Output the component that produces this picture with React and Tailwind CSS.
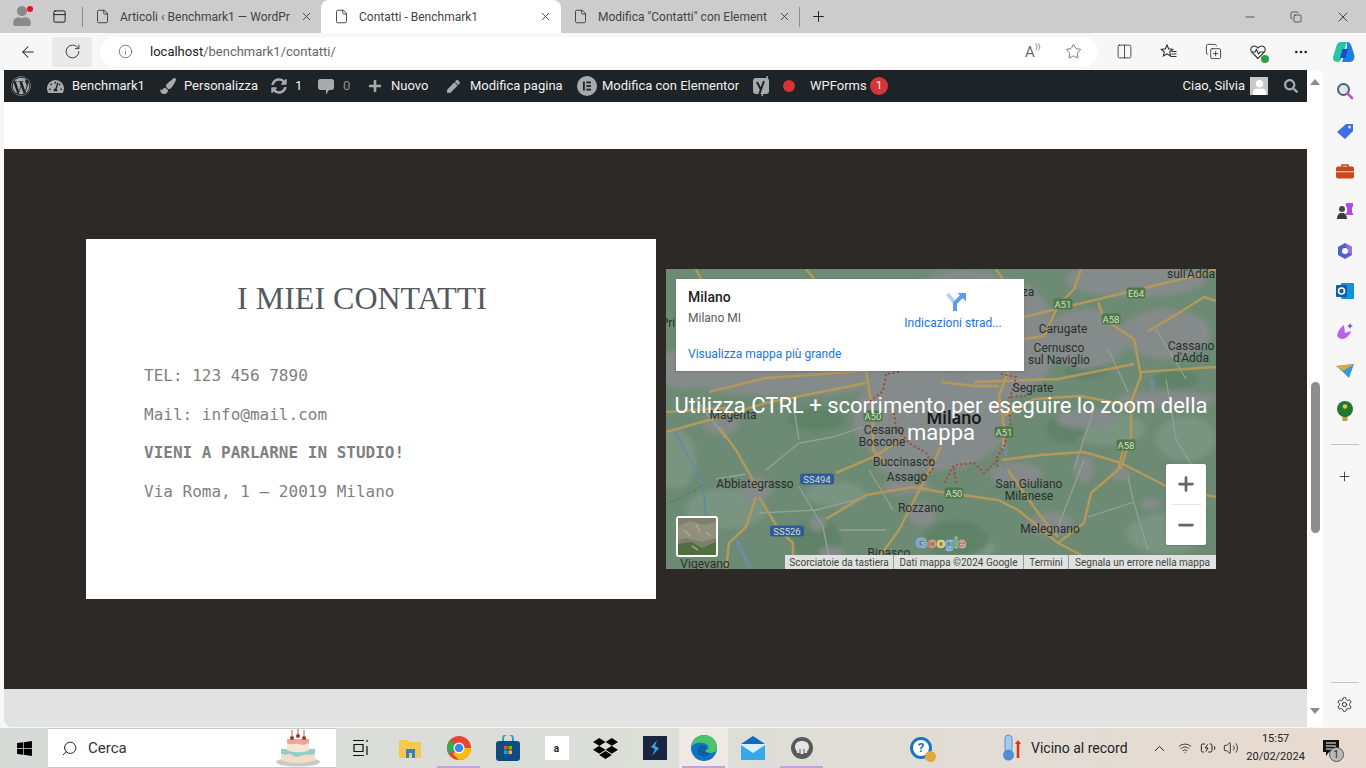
import React from "react";
import {
  ArrowLeft,
  RotateCw,
  Info,
  Star,
  Columns2,
  CopyPlus,
  MoreHorizontal,
  Plus,
  X,
  Minus,
  Copy,
  File,
  PanelTop,
  Settings,
  Search,
  ChevronUp,
  Wifi,
  Volume2,
  BatteryCharging,
} from "lucide-react";
import {
  FaWordpress,
  FaTachometerAlt,
  FaPaintBrush,
  FaSyncAlt,
  FaPlus,
  FaPen,
  FaSearch,
  FaWindows,
  FaDropbox,
  FaUser,
} from "react-icons/fa";

function Tab({ title, active, width, pad, closeGap }) {
  return (
    <div
      className={`flex items-center h-[33px] shrink-0 ${width} ${pad} ${
        active ? "bg-white rounded-t-lg" : ""
      }`}
    >
      <File size={15} strokeWidth={1.4} className="text-[#333] shrink-0" />
      <span className="ml-[10px] text-[12px] text-[#444] whitespace-nowrap overflow-hidden flex-1">
        {title}
      </span>
      <X size={13} strokeWidth={1.5} className={`text-[#333] ml-[6px] shrink-0 ${closeGap}`} />
    </div>
  );
}

function TabStrip() {
  return (
    <div className="flex items-center h-[33px] bg-[#cccccc] shrink-0">
      <div className="relative w-[44px] flex justify-center">
        <div className="w-[18px] h-[22px] flex justify-center items-start">
          <FaUser size={20} className="text-[#8a8a8a]" />
        </div>
        <div className="absolute left-[27px] top-[0px] w-[6px] h-[6px] rounded-full bg-[#e81123]" />
      </div>
      <PanelTop size={15} strokeWidth={1.6} className="text-[#222] ml-[8px]" />
      <div className="w-px h-[20px] bg-[#8e8e8e] ml-[15px]" />
      <Tab title="Articoli ‹ Benchmark1 — WordPr" width="w-[238px]" pad="pl-[12px]" closeGap="mr-[8px]" />
      <Tab title="Contatti - Benchmark1" active width="w-[240px]" pad="pl-[13px]" closeGap="mr-[9px]" />
      <Tab title={'Modifica "Contatti" con Element'} width="w-[238px]" pad="pl-[12px]" closeGap="mr-[8px]" />
      <div className="w-px h-[20px] bg-[#8e8e8e]" />
      <Plus size={17} strokeWidth={1.4} className="text-[#222] ml-[10px]" />
      <div className="flex-1" />
      <Minus size={14} strokeWidth={1.2} className="text-[#222] mr-[33px]" />
      <Copy size={12} strokeWidth={1.3} className="text-[#222] mr-[33px]" />
      <X size={16} strokeWidth={1.2} className="text-[#222] mr-[15px]" />
    </div>
  );
}

function ReadAloud() {
  return (
    <div className="flex items-start text-[#6a6a6a] w-[18px] h-[18px] relative">
      <span className="text-[15px] leading-[18px]">A</span>
      <span className="absolute left-[10px] top-[-2px] text-[8px]">))</span>
    </div>
  );
}

function FavList() {
  return (
    <svg width="18" height="18" viewBox="0 0 18 18" fill="none" stroke="#333" strokeWidth="1.1">
      <path d="M7 2l1.7 3.9 4 .4-3 2.7.9 4-3.6-2.1-3.6 2.1.9-4-3-2.7 4-.4z" />
      <path d="M11.5 8.5h5M11.5 11h5M10.5 13.5h6" />
    </svg>
  );
}

function HeartPulse() {
  return (
    <div className="relative w-[18px] h-[18px]">
      <svg width="18" height="18" viewBox="0 0 18 18" fill="none" stroke="#333" strokeWidth="1.1">
        <path d="M9 15.5L2.5 9C.6 6.5 2.5 3 5.2 3 7 3 8.2 4 9 5c.8-1 2-2 3.8-2 2.7 0 4.6 3.5 2.7 6z" />
        <path d="M3 9h3l1.4-2.5L9.5 11l1.4-2H15" />
      </svg>
      <div className="absolute right-[-2px] bottom-[-2px] w-[8px] h-[8px] rounded-full bg-[#2f9e44]" />
    </div>
  );
}

function CopilotLogo() {
  return (
    <svg width="24" height="24" viewBox="0 0 24 24">
      <path d="M9 2h6l-5 15c-.7 3-2.5 5-5 5-3 0-4.600-3-3.600-6l2.400-8C4.600 4 6 2 9 2z" fill="#29c3a6" />
      <path d="M15 2c2.500 0 4 2 4.600 4.500l2.800 9c.6 3-1.400 6.500-4.400 6.500H10l5-15z" fill="#1f7fe0" />
      <path d="M10.500 9H16l-2.500 9H8z" fill="#1850c4" />
    </svg>
  );
}

function Toolbar() {
  return (
    <div className="flex items-center h-[37px] bg-[#f7f7f7] shrink-0">
      <ArrowLeft size={18} strokeWidth={1.4} className="text-[#222] ml-[19px]" />
      <div className="w-[40px] h-[30px] ml-[15px] bg-[#e9e9e9] rounded flex items-center justify-center">
        <RotateCw size={17} strokeWidth={1.3} className="text-[#333]" />
      </div>
      <div className="w-[998px] h-[30px] ml-[8px] bg-white rounded-full flex items-center">
        <Info size={15} strokeWidth={1.2} className="text-[#555] ml-[18px]" />
        <span className="ml-[17px] text-[13px] text-[#222]">
          localhost<span className="text-[#666]">/benchmark1/contatti/</span>
        </span>
        <div className="flex-1" />
        <ReadAloud />
        <Star size={17} strokeWidth={1.1} className="text-[#555] ml-[22px] mr-[16px]" />
      </div>
      <Columns2 size={17} strokeWidth={1.2} className="text-[#333] ml-[18px]" />
      <div className="ml-[27px]">
        <FavList />
      </div>
      <CopyPlus size={17} strokeWidth={1.2} className="text-[#333] ml-[27px]" />
      <div className="ml-[27px]">
        <HeartPulse />
      </div>
      <MoreHorizontal size={16} strokeWidth={2} className="text-[#222] ml-[26px]" />
      <div className="ml-[23px]">
        <CopilotLogo />
      </div>
    </div>
  );
}

function ElementorIcon() {
  return (
    <svg width="20" height="20" viewBox="0 0 20 20">
      <circle cx="10" cy="10" r="10" fill="#a7aaad" />
      <rect x="6" y="5.5" width="1.8" height="9" fill="#1d2327" />
      <rect x="9.3" y="5.5" width="4.7" height="1.8" fill="#1d2327" />
      <rect x="9.3" y="9.1" width="4.7" height="1.8" fill="#1d2327" />
      <rect x="9.3" y="12.7" width="4.7" height="1.8" fill="#1d2327" />
    </svg>
  );
}

function CommentIcon() {
  return (
    <svg width="16" height="17" viewBox="0 0 16 17">
      <path d="M2.500 1h11C15 1 16 2 16 3.500v6C16 11 15 12 13.500 12H11l-3 4.500V12H2.500C1 12 0 11 0 9.500v-6C0 2 1 1 2.500 1z" fill="#a7aaad" />
    </svg>
  );
}

function YoastIcon() {
  return (
    <svg width="19" height="21" viewBox="0 0 19 21">
      <rect x="0" y="2" width="16" height="16" rx="3" fill="#a7aaad" />
      <path d="M4 6l3.500 7M11 5L6 19" fill="none" stroke="#1d2327" strokeWidth="2" />
      <path d="M14.500 0L9 20" stroke="#a7aaad" strokeWidth="1.5" />
    </svg>
  );
}

function AdminBar() {
  return (
    <div className="flex items-center h-8 bg-[#1d2327] text-[13px] text-[#f0f0f1] shrink-0">
      <FaWordpress size={20} className="text-[#a7aaad] ml-[7px]" />
      <FaTachometerAlt size={17} className="text-[#a7aaad] ml-[16px]" />
      <span className="ml-[8px] w-[71px]">Benchmark1</span>
      <FaPaintBrush size={16} className="text-[#a7aaad] ml-[17px]" />
      <span className="ml-[8px] w-[70px]">Personalizza</span>
      <FaSyncAlt size={16} className="text-[#a7aaad] ml-[17px]" />
      <span className="ml-[8px] w-[6px]">1</span>
      <div className="ml-[17px]">
        <CommentIcon />
      </div>
      <span className="ml-[9px] w-[7px] text-[#8c8f94]">0</span>
      <FaPlus size={14} className="text-[#a7aaad] ml-[18px]" />
      <span className="ml-[9px] w-[39px]">Nuovo</span>
      <FaPen size={13} className="text-[#a7aaad] ml-[17px]" />
      <span className="ml-[10px] w-[93px]">Modifica pagina</span>
      <div className="ml-[14px]">
        <ElementorIcon />
      </div>
      <span className="ml-[5px] w-[137px] whitespace-nowrap">Modifica con Elementor</span>
      <div className="ml-[14px]">
        <YoastIcon />
      </div>
      <div className="w-[12px] h-[12px] rounded-full bg-[#dc3232] ml-[11px]" />
      <span className="ml-[15px] w-[55px]">WPForms</span>
      <div className="w-[18px] h-[18px] rounded-full bg-[#d63638] ml-[5px] flex items-center justify-center text-[11px] text-white">
        1
      </div>
      <div className="flex-1" />
      <span>Ciao, Silvia</span>
      <div className="w-[18px] h-[18px] bg-[#c9c9c9] ml-[5px] flex items-end justify-center overflow-hidden">
        <FaUser size={15} className="text-white" />
      </div>
      <FaSearch size={14} className="text-[#a7aaad] ml-[16px] mr-[9px]" />
    </div>
  );
}

const shields = [
  { t: "A51", x: 397, y: 35, c: "#4f7a47" },
  { t: "E64", x: 470, y: 24, c: "#4f7a47" },
  { t: "A58", x: 445, y: 50, c: "#4f7a47" },
  { t: "A50", x: 207, y: 147, c: "#4f7a47" },
  { t: "A51", x: 338, y: 163, c: "#4f7a47" },
  { t: "A58", x: 460, y: 176, c: "#4f7a47" },
  { t: "A50", x: 288, y: 224, c: "#4f7a47" },
  { t: "SS494", x: 151, y: 210, c: "#2f5c96" },
  { t: "SS526", x: 121, y: 262, c: "#2f5c96" },
];

const labels = [
  ["sull'Adda", 525, 5],
  ["za", 362, 23],
  ["Pri", 2, 54],
  ["Carugate", 397, 60],
  ["Cernusco", 393, 79],
  ["sul Naviglio", 393, 91],
  ["Cassano", 525, 77],
  ["d'Adda", 525, 89],
  ["Segrate", 367, 119],
  ["Magenta", 67, 146],
  ["Cesano", 218, 161],
  ["Boscone", 216, 173],
  ["Buccinasco", 238, 193],
  ["Assago", 241, 208],
  ["Abbiategrasso", 89, 215],
  ["San Giuliano", 363, 215],
  ["Milanese", 363, 227],
  ["Rozzano", 255, 239],
  ["Melegnano", 384, 260],
  ["Binasco", 223, 284],
  ["Vigevano", 39, 295],
];

// grey built-up areas: cx, cy, rx, ry
const urban = [
  [265, 150, 78, 52], [340, 70, 50, 60], [300, 40, 60, 40], [420, 70, 40, 30], [500, 65, 45, 25],
  [470, 10, 70, 18], [90, 220, 16, 12], [55, 155, 18, 10], [120, 115, 90, 12], [235, 195, 25, 12],
  [240, 218, 25, 8], [350, 205, 26, 12], [385, 255, 22, 12], [165, 285, 12, 8], [255, 245, 14, 12],
  [418, 200, 10, 14], [455, 205, 10, 8], [500, 130, 50, 8], [200, 105, 40, 12], [20, 100, 30, 20],
  [420, 150, 30, 10], [105, 90, 70, 30], [152, 255, 9, 7], [485, 235, 10, 6],
];

// lighter fields, for the mottled look of the terrain
const fields = [
  [60, 240, 40, 20], [440, 160, 40, 16], [520, 170, 30, 22], [170, 225, 30, 12], [300, 280, 30, 12],
  [10, 190, 20, 30], [500, 265, 40, 20],
];

const darkFields = [
  [150, 150, 28, 12], [420, 100, 22, 10], [150, 270, 25, 20], [290, 270, 32, 18], [510, 110, 22, 10],
  [400, 160, 20, 14],
];

const roads = [
  "M43 123L100 109L183 103L227 98",
  "M0 143L60 139",
  "M0 163L43 151L100 134L200 114",
  "M53 158L70 181L83 204L90 218",
  "M90 228L80 258L63 274L60 300",
  "M93 228L113 261L127 274L127 300",
  "M170 204L207 188L240 168",
  "M275 178L260 208L233 261L213 288L205 300",
  "M200 101L207 144L207 181L220 194",
  "M247 218L275 223L332 231L352 241L392 274L415 286",
  "M342 201L375 248L392 268",
  "M392 274L418 254L425 224L452 201L457 181",
  "M335 191L375 186L418 183L455 194L502 218L550 228",
  "M432 33L438 50L468 70L475 107L465 133L465 167L455 200",
  "M358 48L462 23L528 7L550 0",
  "M415 0L408 20L392 37",
  "M358 70L378 67L392 37",
  "M308 113L392 110L468 95",
  "M475 103L550 98",
  "M482 62L508 47L538 28L550 32",
  "M342 103L333 127L338 157L337 180",
  "M338 147L368 130L415 127L465 137",
  "M275 113L308 117L333 117",
  "M160 250L200 226L247 218",
  "M30 0L45 30M140 0L165 30M330 0L350 30",
];

const minorRoads = [
  "M100 201L133 174L167 168L197 158",
  "M127 134L133 171",
  "M133 218L157 258L163 288",
  "M173 261L220 261",
  "M93 244L150 241L200 228",
  "M203 201L227 241",
  "M392 258L418 191",
  "M422 248L468 233",
  "M462 208L468 234L482 281",
  "M428 140L408 200",
  "M442 80L462 123",
  "M30 130L60 170M50 210L80 205",
  "M500 110L510 170L540 220",
  "M490 60L520 110",
];

const trails = [
  "M233 103L220 105L217 122L203 133",
  "M228 144L230 158L243 174L260 184L268 198L260 208L253 215",
  "M332 191L318 204L308 194L288 196L278 214",
  "M290 214L288 198",
  "M335 105L350 108L348 117L342 133L345 157L338 177L330 190L332 200",
  "M345 128L360 127",
];

function MapDrawing() {
  return (
    <svg width="550" height="300" viewBox="0 0 550 300" className="block" fontFamily="Roboto, sans-serif">
      <defs>
        <filter id="soft">
          <feGaussianBlur stdDeviation="2.5" />
        </filter>
      </defs>
      <rect width="550" height="300" fill="#6d8a74" />
      <g filter="url(#soft)">
        {fields.map(([x, y, rx, ry], i) => (
          <ellipse key={i} cx={x} cy={y} rx={rx} ry={ry} fill="#7a9482" />
        ))}
        {darkFields.map(([x, y, rx, ry], i) => (
          <ellipse key={i} cx={x} cy={y} rx={rx} ry={ry} fill="#5f8268" />
        ))}
        {urban.map(([x, y, rx, ry], i) => (
          <ellipse key={i} cx={x} cy={y} rx={rx} ry={ry} fill="#858b8a" />
        ))}
      </g>
      {minorRoads.map((d, i) => (
        <path key={i} d={d} fill="none" stroke="#92a196" strokeWidth="1.3" />
      ))}
      <path d="M3 151L20 184L37 214L40 251" fill="none" stroke="#5f8aa5" strokeWidth="1.5" />
      <path d="M0 235L20 226L37 216" fill="none" stroke="#56696b" strokeWidth="1" strokeDasharray="2 2" />
      <path d="M70 270L85 300M486 110v10M340 175v12" fill="none" stroke="#6a8ea5" strokeWidth="3" />
      {roads.map((d, i) => (
        <path key={i} d={d} fill="none" stroke="#b2995a" strokeWidth="2.5" strokeLinejoin="round" />
      ))}
      {trails.map((d, i) => (
        <path key={i} d={d} fill="none" stroke="#a04a3c" strokeWidth="2" strokeDasharray="2 2.5" />
      ))}
      {shields.map((s, i) => (
        <g key={i}>
          <rect
            x={s.x - (s.t.length > 3 ? 17 : 9.5)}
            y={s.y - 5.5}
            width={s.t.length > 3 ? 34 : 19}
            height="11"
            rx="2.5"
            fill={s.c}
          />
          <text x={s.x} y={s.y + 3.5} fontSize="9.5" textAnchor="middle" fill="#d3ded2">
            {s.t}
          </text>
        </g>
      ))}
      {labels.map(([t, x, y], i) => (
        <text key={i} x={x} y={y + 4} fontSize="12" textAnchor="middle" fill="#2b2f2d">
          {t}
        </text>
      ))}
      <text x="288" y="155" fontSize="18" fontWeight="500" textAnchor="middle" fill="#15181a">
        Milano
      </text>
      <text
        x="275"
        y="279"
        fontSize="14.5"
        fontWeight="700"
        textAnchor="middle"
        fontFamily="Liberation Sans, sans-serif"
        stroke="#dfe3e0"
        strokeWidth="0.5"
      >
        <tspan fill="#4285f4">G</tspan>
        <tspan fill="#ea4335">o</tspan>
        <tspan fill="#fbbc05">o</tspan>
        <tspan fill="#4285f4">g</tspan>
        <tspan fill="#34a853">l</tspan>
        <tspan fill="#ea4335">e</tspan>
      </text>
    </svg>
  );
}

function DirectionsIcon() {
  return (
    <svg width="20" height="20" viewBox="0 0 20 20" className="ml-[5px]">
      <path d="M1.5 2L9 11" fill="none" stroke="#b8d3f3" strokeWidth="4" />
      <path d="M9 19v-8l7-7" fill="none" stroke="#5e9de6" strokeWidth="4" />
      <polygon points="11.5,1 20,1 20,9.5" fill="#5e9de6" />
    </svg>
  );
}

function MapBox() {
  return (
    <div className="relative w-[550px] h-[300px] ml-[10px] mt-[30px] overflow-hidden">
      <MapDrawing />
      <div className="absolute left-[10px] top-[10px] w-[348px] h-[92px] bg-white flex justify-between shadow-sm">
        <div className="pl-[12px]">
          <div className="text-[14px] font-medium text-[#222] mt-[9px] leading-[18px]">Milano</div>
          <div className="text-[12px] text-[#5b5b5b] mt-[4px] leading-[16px]">Milano MI</div>
          <div className="text-[12px] text-[#1a73e8] mt-[20px] leading-[16px]">Visualizza mappa più grande</div>
        </div>
        <div className="w-[119px] flex flex-col items-center pt-[13px] pr-[23px]">
          <DirectionsIcon />
          <span className="text-[12px] text-[#1a73e8] whitespace-nowrap mt-[3px] leading-[16px]">
            Indicazioni strad...
          </span>
        </div>
      </div>
      <div className="absolute inset-x-0 top-[123px] text-center text-[22px] leading-[27px] text-white px-[4px]">
        Utilizza CTRL + scorrimento per eseguire lo zoom della mappa
      </div>
      <div className="absolute left-[10px] bottom-[12px] w-[42px] h-[41px] border-2 border-white rounded-[3px] overflow-hidden">
        <svg width="38" height="37" viewBox="0 0 38 37">
          <rect width="38" height="37" fill="#7d8069" />
          <path d="M0 8L12 3L26 7L38 4V20L24 24L8 20L0 22z" fill="#938f7d" />
          <path d="M0 26L14 24L24 30L38 24V37H0z" fill="#4f6f3e" />
          <path d="M6 12l6 6M18 6l4 8M28 14l5 4M14 28l6 4" stroke="#a9a89a" strokeWidth="1.5" />
        </svg>
      </div>
      <div className="absolute right-[10px] bottom-[24px] w-[40px] h-[81px] bg-white flex flex-col items-center rounded-[2px] shadow-sm">
        <div className="h-[40px] flex items-center justify-center">
          <Plus size={22} strokeWidth={3} className="text-[#666]" />
        </div>
        <div className="w-[30px] h-px bg-[#e6e6e6]" />
        <div className="h-[40px] flex items-center justify-center">
          <Minus size={22} strokeWidth={3} className="text-[#666]" />
        </div>
      </div>
      <div className="absolute right-0 bottom-0 h-[14px] w-[431px] bg-[#dfe2df] flex items-center text-[10px] text-[#444] whitespace-nowrap">
        <span className="w-[109px] text-center border-r border-[#999]">Scorciatoie da tastiera</span>
        <span className="w-[130px] text-center border-r border-[#999]">Dati mappa ©2024 Google</span>
        <span className="w-[45px] text-center border-r border-[#999]">Termini</span>
        <span className="w-[147px] text-center">Segnala un errore nella mappa</span>
      </div>
    </div>
  );
}

function ContactCard() {
  const lineClass = "leading-6 mb-[14.5px]";
  return (
    <div className="w-[570px] h-[360px] bg-white shrink-0">
      <h2 className="pt-[39px] pr-[18px] text-center text-[32px] leading-[40px] text-[#54595f] font-['Liberation_Serif',serif]">
        I MIEI CONTATTI
      </h2>
      <div className="mt-[46px] pl-[58px] text-[16px] text-[#7f7f7f] font-['DejaVu_Sans_Mono',monospace]">
        <p className={lineClass}>TEL: 123 456 7890</p>
        <p className={lineClass}>Mail: info@mail.com</p>
        <p className={`${lineClass} font-bold`}>VIENI A PARLARNE IN STUDIO!</p>
        <p className={lineClass}>Via Roma, 1 – 20019 Milano</p>
      </div>
    </div>
  );
}

function Scrollbar() {
  return (
    <div className="w-[16px] bg-white rounded-tr-lg flex flex-col items-center shrink-0">
      <svg width="10" height="6" viewBox="0 0 10 6" className="mt-[9px]">
        <polygon points="5,0 10,6 0,6" fill="#8a8a8a" />
      </svg>
      <div className="w-[9px] h-[151px] rounded-full bg-[#8d8d8d] mt-[297px]" />
      <div className="flex-1" />
      <svg width="10" height="6" viewBox="0 0 10 6" className="mb-[13px]">
        <polygon points="0,0 10,0 5,6" fill="#8a8a8a" />
      </svg>
    </div>
  );
}

function SideIcon({ children }) {
  return <div className="h-[40px] flex items-center justify-center">{children}</div>;
}

function Sidebar() {
  return (
    <div className="w-[43px] bg-[#f7f7f7] flex flex-col items-stretch shrink-0 pt-[1px]">
      <SideIcon>
        <svg width="18" height="18" viewBox="0 0 18 18">
          <circle cx="7.5" cy="7.5" r="5.5" fill="#dbe7ef" stroke="#55606a" strokeWidth="2" />
          <path d="M11.5 11.5L16 16" stroke="#c74ed1" strokeWidth="2.5" strokeLinecap="round" />
        </svg>
      </SideIcon>
      <SideIcon>
        <svg width="18" height="18" viewBox="0 0 18 18">
          <path d="M1 10L10 2h7v7l-8 8z" fill="#3d6fe8" />
          <circle cx="13.5" cy="5" r="1.6" fill="#e8e36a" />
        </svg>
      </SideIcon>
      <SideIcon>
        <svg width="18" height="16" viewBox="0 0 18 16">
          <path d="M6 4V2h6v2" fill="none" stroke="#b8431d" strokeWidth="1.5" />
          <rect y="3.5" width="18" height="12" rx="2" fill="#c8491e" />
          <rect y="8" width="18" height="1.4" fill="#f0b090" />
        </svg>
      </SideIcon>
      <SideIcon>
        <svg width="18" height="18" viewBox="0 0 18 18">
          <path d="M10 1h7v3l-1 2v5h1v2h-7v-2h1V6l-1-2z" fill="#b14be0" />
          <circle cx="6" cy="7" r="3" fill="#4a4a4a" />
          <path d="M1 17c0-4 2-5 3-6h4c1 1 3 2 3 6z" fill="#3c3c3c" />
        </svg>
      </SideIcon>
      <SideIcon>
        <svg width="18" height="18" viewBox="0 0 18 18">
          <path d="M9 1l7 4v8l-7 4-7-4V5z" fill="#4f5fcf" />
          <path d="M9 1l7 4v8l-5-3V6z" fill="#9a6fe0" />
          <circle cx="9" cy="9" r="3" fill="#fff" />
        </svg>
      </SideIcon>
      <SideIcon>
        <svg width="18" height="18" viewBox="0 0 18 18">
          <rect x="5" y="1" width="13" height="16" rx="1" fill="#1490df" />
          <rect y="3" width="11" height="12" rx="1" fill="#0a5ea8" />
          <circle cx="5.5" cy="9" r="3" fill="none" stroke="#fff" strokeWidth="1.6" />
        </svg>
      </SideIcon>
      <SideIcon>
        <svg width="18" height="18" viewBox="0 0 18 18" fill="none">
          <path d="M1 13c1 5 8 5 11 1 2-2 3-4 3-5L9 11 8 3C5 5 2 9 1 13z" fill="#b765e8" />
          <path d="M14 1l1 2 2 1-2 1-1 2-1-2-2-1 2-1z" fill="#7b56e0" />
        </svg>
      </SideIcon>
      <SideIcon>
        <svg width="18" height="14" viewBox="0 0 18 14">
          <path d="M0 2L18 0L13 14L8 9z" fill="#3b97dc" />
          <path d="M0 2L18 0L7 7z" fill="#e0a93c" />
        </svg>
      </SideIcon>
      <SideIcon>
        <svg width="18" height="20" viewBox="0 0 18 20">
          <rect x="6.5" y="13" width="5" height="7" fill="#c49a3d" />
          <circle cx="9" cy="8" r="8" fill="#1e7a33" />
          <circle cx="9" cy="5.5" r="2.3" fill="#e5c53a" />
        </svg>
      </SideIcon>
      <div className="w-[28px] h-px bg-[#c4c4c4] mx-auto mt-[13px]" />
      <div className="flex justify-center mt-[24px]">
        <Plus size={15} strokeWidth={1.3} className="text-[#222]" />
      </div>
      <div className="flex-1" />
      <div className="w-[28px] h-px bg-[#c4c4c4] mx-auto" />
      <div className="flex justify-center mt-[13px] mb-[14px]">
        <Settings size={17} strokeWidth={1.3} className="text-[#222]" />
      </div>
    </div>
  );
}

function TaskItem({ children, active, underline }) {
  return (
    <div
      className={`w-[49px] h-[40px] flex items-center justify-center relative shrink-0 ${
        active ? "bg-[#efe9e5]" : ""
      }`}
    >
      {children}
      {underline && <div className="absolute bottom-0 left-[3px] right-[3px] h-[2px] bg-[#c99fe0]" />}
    </div>
  );
}

function Cake() {
  return (
    <svg width="46" height="38" viewBox="0 0 46 38">
      <ellipse cx="23" cy="33" rx="22" ry="4.5" fill="#c9c9c9" />
      <path d="M6 20h34v11c-5 4-29 4-34 0z" fill="#f3ddc8" />
      <path d="M6 24c5 4 8-1 11 2s8 2 11 0 8 2 12-2v-4H6z" fill="#8fcfc6" />
      <path d="M12 10h22v11c-4 3-18 3-22 0z" fill="#f6e6d8" />
      <path d="M12 14c4 3 7 0 11 1s7 1 11-1v-4H12z" fill="#e8a79a" />
      <circle cx="17" cy="9" r="2" fill="#a8322c" />
      <circle cx="23" cy="7" r="2" fill="#a8322c" />
      <circle cx="29" cy="9" r="2" fill="#a8322c" />
      <path d="M17 7V1M23 5V0M29 7V1" stroke="#c65a50" strokeWidth="1" />
    </svg>
  );
}

function Taskbar() {
  return (
    <div className="flex items-center h-[40px] mt-[1px] bg-gradient-to-r from-[#d7dbd7] via-[#dcded8] to-[#e8dad0] shrink-0">
      <div className="w-[48px] flex justify-center">
        <FaWindows size={17} className="text-black" />
      </div>
      <div className="w-[288px] h-[40px] bg-white flex items-center border-y border-[#c8c8c8]">
        <Search size={17} strokeWidth={1.3} className="ml-[13px] text-[#111] -scale-x-100" />
        <span className="ml-[10px] text-[15px] text-[#333]">Cerca</span>
        <div className="flex-1" />
        <div className="mr-[15px]">
          <Cake />
        </div>
      </div>
      <TaskItem>
        <svg width="16" height="18" viewBox="0 0 16 18" fill="none" stroke="#111" strokeWidth="1.2">
          <path d="M0 1.5h11M0 16.5h11M1 5.5h9v7H1zM14 1v2M14 7v9" />
        </svg>
      </TaskItem>
      <TaskItem>
        <svg width="22" height="20" viewBox="0 0 22 20">
          <path d="M0 2h9l2 2h11v16H0z" fill="#f3c94f" />
          <rect x="7" y="11" width="9" height="9" fill="#2f83c9" />
          <rect x="10" y="15" width="3" height="5" fill="#f3c94f" />
        </svg>
      </TaskItem>
      <TaskItem underline>
        <svg width="24" height="24" viewBox="0 0 24 24">
          <circle cx="12" cy="12" r="12" fill="#ea4335" />
          <path d="M12 12L1.6 18A12 12 0 0 1 3 4z" fill="#34a853" />
          <path d="M12 12h12a12 12 0 0 1-12 12L6 18z" fill="#fbbc05" />
          <circle cx="12" cy="12" r="5.5" fill="#fff" />
          <circle cx="12" cy="12" r="4.3" fill="#4285f4" />
        </svg>
      </TaskItem>
      <TaskItem>
        <svg width="24" height="26" viewBox="0 0 24 26">
          <path d="M7 8V4a5 5 0 0 1 10 0v4" fill="none" stroke="#2aa0c8" strokeWidth="2" />
          <rect y="6" width="24" height="20" rx="3" fill="#0f4c81" />
          <rect x="8" y="11" width="3.5" height="3.5" fill="#f25022" />
          <rect x="12.5" y="11" width="3.5" height="3.5" fill="#7fba00" />
          <rect x="8" y="15.5" width="3.5" height="3.5" fill="#00a4ef" />
          <rect x="12.5" y="15.5" width="3.5" height="3.5" fill="#ffb900" />
        </svg>
      </TaskItem>
      <TaskItem>
        <div className="w-[24px] h-[24px] bg-white flex items-center justify-center text-[10px] font-bold text-[#222]">a</div>
      </TaskItem>
      <TaskItem>
        <FaDropbox size={25} className="text-black" />
      </TaskItem>
      <TaskItem>
        <div className="w-[24px] h-[24px] bg-[#1b2440] flex items-center justify-center">
          <svg width="10" height="16" viewBox="0 0 10 16">
            <path d="M7 0L1 7l4 2-3 7 7-8-4-2z" fill="#36a6e0" />
          </svg>
        </div>
      </TaskItem>
      <TaskItem active underline>
        <svg width="26" height="26" viewBox="0 0 26 26">
          <circle cx="13" cy="13" r="13" fill="#1173c4" />
          <path d="M0 13C1 4 8 0 13 0c8 0 13 6 13 13 0 3-3 5-7 5-3 0-5-1-5-3 3 0 4-2 3-4-2-4-15-5-17 2z" fill="#4cc26a" />
          <path d="M6 17c0-5 5-8 8-6 2 1 1 4 0 4 0 2 2 3 5 3-2 3-6 4-8 3-3-1-5-2-5-4z" fill="#0d5ea6" />
        </svg>
      </TaskItem>
      <TaskItem>
        <svg width="24" height="24" viewBox="0 0 24 24">
          <path d="M12 0l12 8v16H0V8z" fill="#0f6cbd" />
          <rect y="9" width="24" height="15" fill="#38a9e8" />
          <path d="M0 9l12 8 12-8v-1H0z" fill="#d8f0fa" />
        </svg>
      </TaskItem>
      <TaskItem underline>
        <svg width="22" height="22" viewBox="0 0 22 22">
          <circle cx="11" cy="11" r="11" fill="#595959" />
          <path d="M4 10c0-4 3-6 7-6s7 2 7 6c0 3-2 3-2 6h-2.5v-4h-1v5h-3v-5h-1v4H6c0-3-2-3-2-6z" fill="#e4e4e4" />
        </svg>
      </TaskItem>
      <div className="w-[84px]" />
      <div className="relative">
        <div className="w-[22px] h-[22px] rounded-full bg-white border-[3px] border-[#1b73c4] flex items-center justify-center text-[13px] font-bold text-[#1b73c4]">
          ?
        </div>
        <div className="absolute right-[-4px] bottom-[-3px] w-[11px] h-[11px] rounded-full bg-[#e0a93c]" />
      </div>
      <svg width="20" height="28" viewBox="0 0 20 28" className="ml-[70px]">
        <rect x="3" y="1" width="7" height="18" rx="3.5" fill="#a9c9ea" stroke="#5c8fc7" />
        <circle cx="6.5" cy="21" r="5.5" fill="#4b8fd4" />
        <path d="M16 8v16" stroke="#e82d1c" strokeWidth="2.5" />
        <path d="M13 10l3-4 3 4z" fill="#e82d1c" />
      </svg>
      <span className="ml-[9px] text-[14px] text-[#222] whitespace-nowrap">Vicino al record</span>
      <ChevronUp size={17} strokeWidth={1.4} className="text-[#222] ml-[23px]" />
      <Wifi size={14} strokeWidth={1.4} className="text-[#222] ml-[10px]" />
      <BatteryCharging size={16} strokeWidth={1.5} className="text-[#222] ml-[8px]" />
      <Volume2 size={16} strokeWidth={1.3} className="text-[#222] ml-[7px]" />
      <div className="ml-[7px] w-[60px] text-center text-[11px] leading-[18px] text-[#222]">
        <div>15:57</div>
        <div>20/02/2024</div>
      </div>
      <div className="relative ml-[17px]">
        <svg width="16" height="16" viewBox="0 0 16 16">
          <path d="M0 0h16v12H6l-3 4v-4H0z" fill="#111" />
          <path d="M3 3h10M3 6h10M3 9h7" stroke="#fff" />
        </svg>
        <div className="absolute left-[6px] top-[7px] w-[15px] h-[15px] rounded-full bg-[#bdb8b3] border border-[#555] flex items-center justify-center text-[10px] text-[#222]">
          1
        </div>
      </div>
    </div>
  );
}

export default function App() {
  return (
    <div className="w-[1366px] h-[768px] overflow-hidden flex flex-col bg-[#f7f7f7] font-['Roboto',sans-serif]">
      <TabStrip />
      <Toolbar />
      <div className="flex h-[657px]">
        <div className="w-[1303px] ml-[4px] flex flex-col bg-[#e2e2e2] rounded-bl-lg overflow-hidden shrink-0">
          <AdminBar />
          <div className="h-[47px] bg-white shrink-0" />
          <div className="h-[540px] bg-[#2c2926] pl-[82px] pt-[90px] flex items-start shrink-0">
            <ContactCard />
            <MapBox />
          </div>
        </div>
        <Scrollbar />
        <Sidebar />
      </div>
      <Taskbar />
    </div>
  );
}
